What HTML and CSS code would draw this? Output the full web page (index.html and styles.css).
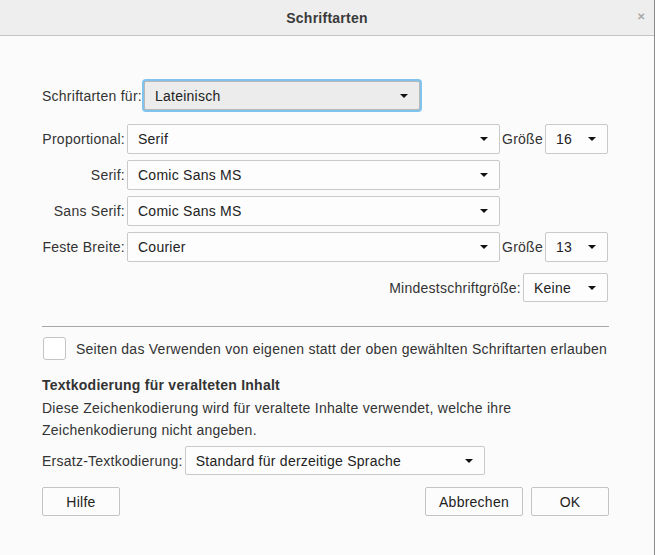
FILE: index.html
```html
<!DOCTYPE html>
<html lang="de">
<head>
<meta charset="utf-8">
<title>Schriftarten</title>
<link rel="stylesheet" href="styles.css">
</head>
<body>
<div class="dialog">
  <div class="titlebar">
    <span class="title">Schriftarten</span>
    <span class="close">✕</span>
  </div>
  <div class="content">
    <div class="lang-row">
      <span class="label">Schriftarten für:</span>
      <div class="select select-lang focused"><span>Lateinisch</span><i class="arrow"></i></div>
    </div>

    <div class="font-grid">
      <span class="label right">Proportional:</span>
      <div class="select"><span>Serif</span><i class="arrow"></i></div>
      <span class="label size-label">Größe</span>
      <div class="select"><span>16</span><i class="arrow"></i></div>

      <span class="label right">Serif:</span>
      <div class="select"><span>Comic Sans MS</span><i class="arrow"></i></div>
      <span></span><span></span>

      <span class="label right">Sans Serif:</span>
      <div class="select"><span>Comic Sans MS</span><i class="arrow"></i></div>
      <span></span><span></span>

      <span class="label right">Feste Breite:</span>
      <div class="select"><span>Courier</span><i class="arrow"></i></div>
      <span class="label size-label">Größe</span>
      <div class="select"><span>13</span><i class="arrow"></i></div>
    </div>

    <div class="min-row">
      <span class="label">Mindestschriftgröße:</span>
      <div class="select select-min"><span>Keine</span><i class="arrow"></i></div>
    </div>

    <hr class="sep">

    <label class="check-row">
      <span class="checkbox"></span>
      <span class="label">Seiten das Verwenden von eigenen statt der oben gewählten Schriftarten erlauben</span>
    </label>

    <h3 class="heading">Textkodierung für veralteten Inhalt</h3>
    <p class="desc">Diese Zeichenkodierung wird für veraltete Inhalte verwendet, welche ihre Zeichenkodierung nicht angeben.</p>

    <div class="enc-row">
      <span class="label">Ersatz-Textkodierung:</span>
      <div class="select select-enc"><span>Standard für derzeitige Sprache</span><i class="arrow"></i></div>
    </div>

    <div class="buttons">
      <button class="btn">Hilfe</button>
      <div class="spacer"></div>
      <button class="btn btn-wide">Abbrechen</button>
      <button class="btn">OK</button>
    </div>
  </div>
</div>
</body>
</html>
```

FILE: styles.css
```css
* { box-sizing: border-box; }

html, body {
  margin: 0;
  padding: 0;
  background: #fbfbfb;
}

body {
  font-family: "Liberation Sans", Arial, sans-serif;
  font-size: 14px;
  letter-spacing: 0.25px;
  color: #333;
}

.dialog {
  width: 655px;
  height: 555px;
  border-right: 1px solid #8a8a8a;
  background: #fbfbfb;
}

.titlebar {
  height: 36px;
  background: #eeeeee;
  border-bottom: 1px solid #c4c4c4;
  display: flex;
  align-items: center;
  justify-content: center;
  position: relative;
}

.title {
  font-weight: bold;
  font-size: 14px;
  color: #3a3a3a;
}

.close {
  position: absolute;
  right: 9px;
  top: 11px;
  font-size: 10px;
  color: #a8a8a8;
  font-weight: bold;
}

.content {
  padding: 45px 46px 0 42px;
}

.label {
  color: #333;
  white-space: nowrap;
}

.select {
  height: 30px;
  border: 1px solid #c9c9c9;
  border-radius: 2px;
  background: #fdfdfd;
  display: flex;
  align-items: center;
  justify-content: space-between;
  padding: 0 10px 0 10px;
  color: #222;
}

.arrow {
  width: 0;
  height: 0;
  border-left: 4px solid transparent;
  border-right: 4px solid transparent;
  border-top: 4px solid #111;
  margin-right: 1px;
}

.lang-row {
  display: flex;
  align-items: center;
  gap: 2px;
}

.select-lang {
  width: 276px;
  height: 29px;
  background: #ececec;
  box-shadow: 0 0 0 2px #7fc3ee;
  border-color: #b8b8b8;
}

.font-grid {
  margin-top: 14px;
  display: grid;
  grid-template-columns: 83px 373px auto 63px;
  grid-auto-rows: 30px;
  column-gap: 2px;
  row-gap: 6px;
  align-items: center;
}

.right { text-align: right; }

.size-label {
  margin-right: 0;
}

.min-row {
  margin-top: 11px;
  display: flex;
  justify-content: flex-end;
  align-items: center;
  gap: 2px;
}

.select-min {
  width: 85px;
  height: 29px;
}

.sep {
  margin: 24px 0 0 0;
  border: 0;
  border-top: 1px solid #a8a8a8;
  width: 567px;
}

.check-row {
  margin-top: 10px;
  display: flex;
  align-items: center;
  gap: 10px;
}

.checkbox {
  width: 23px;
  height: 23px;
  border: 1px solid #c4c4c4;
  border-radius: 3px;
  background: #fff;
  margin-left: 1px;
}

.heading {
  margin: 15px 0 0 0;
  font-size: 14px;
  font-weight: bold;
  color: #333;
  line-height: 20px;
}

.desc {
  margin: 2px 0 0 0;
  width: 560px;
  line-height: 22px;
  color: #333;
}

.enc-row {
  margin-top: 5px;
  display: flex;
  align-items: center;
  gap: 2px;
}

.select-enc {
  width: 300px;
  height: 29px;
}

.buttons {
  margin-top: 12px;
  display: flex;
  gap: 8px;
  width: 567px;
}

.spacer { flex: 1; }

.btn {
  font-family: inherit;
  font-size: 14px;
  letter-spacing: inherit;
  color: #222;
  width: 78px;
  height: 29px;
  border: 1px solid #c4c4c4;
  border-radius: 2px;
  background: #fcfcfc;
  padding: 0;
}

.btn-wide { width: 98px; }
```
